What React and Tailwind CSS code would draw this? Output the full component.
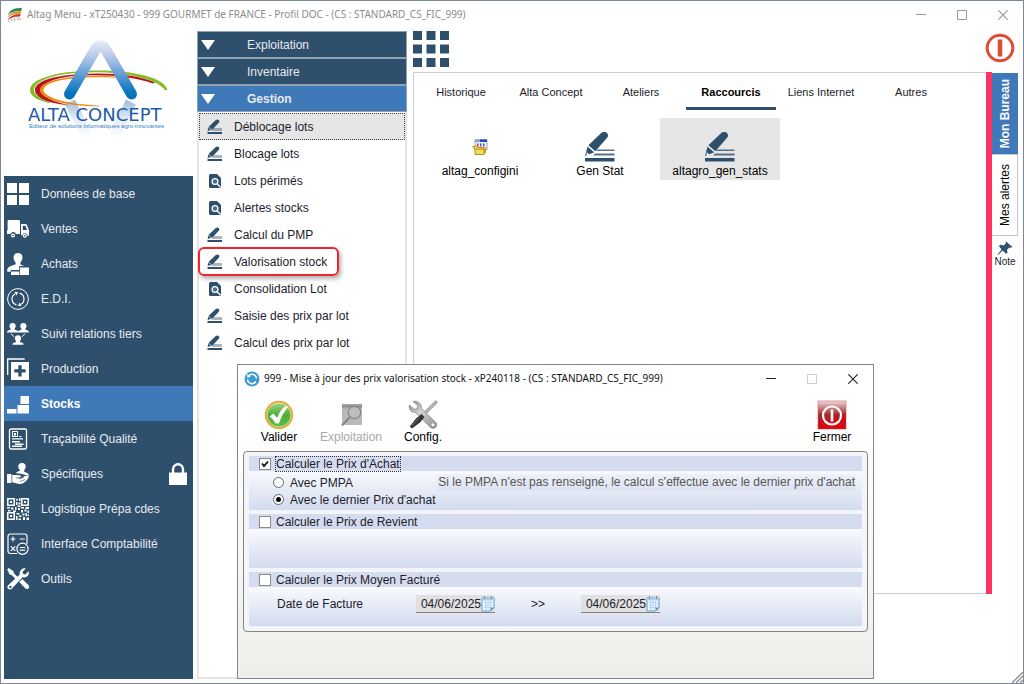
import { useState } from 'react';

const NAV_ITEMS = [
    { label: 'Données de base', icon: BlocksIcon },
    { label: 'Ventes', icon: TruckIcon },
    { label: 'Achats', icon: BuyerIcon },
    { label: 'E.D.I.', icon: EdiIcon },
    { label: 'Suivi relations tiers', icon: RelationsIcon },
    { label: 'Production', icon: ProductionIcon },
    { label: 'Stocks', icon: StocksIcon },
    { label: 'Traçabilité Qualité', icon: QualityIcon },
    { label: 'Spécifiques', icon: HandshakeIcon, locked: true },
    { label: 'Logistique Prépa cdes', icon: QrIcon },
    { label: 'Interface Comptabilité', icon: CalcIcon },
    { label: 'Outils', icon: ToolsIcon },
];

const GROUPS = ['Exploitation', 'Inventaire', 'Gestion'];

const MENU_ITEMS = [
    { label: 'Déblocage lots', type: 'edit' },
    { label: 'Blocage lots', type: 'edit' },
    { label: 'Lots périmés', type: 'search' },
    { label: 'Alertes stocks', type: 'search' },
    { label: 'Calcul du PMP', type: 'edit' },
    { label: 'Valorisation stock', type: 'edit', highlight: true },
    { label: 'Consolidation Lot', type: 'search' },
    { label: 'Saisie des prix par lot', type: 'edit' },
    { label: 'Calcul des prix par lot', type: 'edit' },
];

const TABS = ['Historique', 'Alta Concept', 'Ateliers', 'Raccourcis', 'Liens Internet', 'Autres'];

const SHORTCUTS = [
    { label: 'altag_configini', type: 'config' },
    { label: 'Gen Stat', type: 'edit' },
    { label: 'altagro_gen_stats', type: 'edit' },
];

/* ---------- navigation icons ---------- */

function NavSvg({ children }) {
    return <svg viewBox="0 0 22 22" className="size-[22px] shrink-0" fill="#fff" aria-hidden="true">{children}</svg>;
}

function BlocksIcon() {
    return <NavSvg><path d="M0 0h10v10H0zM12 0h10v10H12zM0 12h10v10H0zM12 12h10v10H12z" /></NavSvg>;
}

function TruckIcon() {
    return (
        <NavSvg>
            <path d="M1.500 2h10.300Q13 2 13 3.500V16H9a2.800 2.800 0 0 0-5.400 0H0V13l.6-1V3.200Q.6 2 1.500 2z" />
            <path fillRule="evenodd" d="M14 6h4.500q1 0 1.400.9L22 12.300V17q0 1-1 1h-.4a2.700 2.700 0 0 0-5.300-.8H14zm1.800 1.700v4.200h4.200l-1.500-4.200z" />
            <circle cx="6" cy="17.500" r="2" /><circle cx="17.800" cy="17.800" r="2" />
            <circle cx="6" cy="17.500" r=".8" fill="#2e506d" /><circle cx="17.800" cy="17.800" r=".8" fill="#2e506d" />
        </NavSvg>
    );
}

function BuyerIcon() {
    return (
        <NavSvg>
            <path d="M11 0c3 0 4.600 2 4.400 4.800-.1 2-1 3.600-2 4.500v2.200l3.600 1.400-4.800.1v4H3.500v2L0 18.500c0-3.500 1.500-4.700 4-5.600l4.600-1.700V9.300c-1.200-1-2-2.600-2-4.500C6.500 2 8 0 11 0z" />
            <path d="M13 14.500h9V22h-9zM4 18.500h8.300V22H4z" />
        </NavSvg>
    );
}

function EdiIcon() {
    return (
        <NavSvg>
            <g fill="none" stroke="#fff">
                <circle cx="11" cy="11" r="10.400" />
                <path d="M9.500 16.800A6 6 0 0 1 8.200 5.700M12.500 5.200a6 6 0 0 1 1.300 11.100" strokeWidth="1.200" />
            </g>
            <path d="M7.500 3.800l3.600.5-1.600 3.200zM14.500 18.200l-3.600-.5 1.600-3.200z" />
        </NavSvg>
    );
}

function Bust({ x, y }) {
    return <path transform={`translate(${x} ${y})`} d="M5 0c2.300 0 3.200 1.400 3.100 3.200-.1 1.200-.6 2-1.200 2.600v.8l2.400.9c.9.400 1.200 1 1.200 2H-.5c0-1 .3-1.600 1.200-2l2.400-.9v-.8C2.500 5.200 2 4.400 1.900 3.200 1.800 1.400 2.700 0 5 0z" />;
}

function RelationsIcon() {
    return (
        <NavSvg>
            <Bust x={0.6} y={0} /><Bust x={11.400} y={0} /><Bust x={6} y={12.300} />
            <path d="M4 10.800l3.200 3M18 10.800l-3.200 3" stroke="#fff" />
        </NavSvg>
    );
}

function ProductionIcon() {
    return (
        <NavSvg>
            <path d="M.7 17V1h17" fill="none" stroke="#fff" strokeWidth="1.300" />
            <path fillRule="evenodd" d="M4 4h18v18H4zm7.300 3.200v4H7.300v3.200h4v4h3.300v-4h4v-3.200h-4v-4z" />
        </NavSvg>
    );
}

function StocksIcon() {
    return <NavSvg><path d="M13.500 3H22v8h-8.500zM10.500 12H22v8.500H10.500zM0 16h9.500v4.500H0z" /></NavSvg>;
}

function QualityIcon() {
    return (
        <NavSvg>
            <rect x="2.500" y="1" width="17" height="20" rx="1.500" fill="none" stroke="#fff" strokeWidth="1.300" />
            <rect x="5.500" y="3.500" width="5" height="5" fill="none" stroke="#fff" />
            <path d="M7 5h2v2.500H7zM12 8h2.500v1H12zM5 10.200h11v1.400H5zM5 13h8v1.400H5zM8 15.500h8.500v1.400H8zM5 17.600h10V19H5z" />
        </NavSvg>
    );
}

function HandshakeIcon() {
    return (
        <NavSvg>
            <path d="M15 0c2.800 0 4 1.800 3.700 4-.2 1.600-.8 2.400-1.500 3v1.800l3 1.200c1.200.6 1.700 1.500 1.700 3l-5-1.500-4.500-1-3.400-.3c.4-.9.700-1.200 1.500-1.500l2.400-1V7c-.9-.8-1.500-1.800-1.600-3.100C11 1.800 12.200 0 15 0z" />
            <path d="M0 11h4.500v9H0z" />
            <path d="M5.200 12h3.500l4 .2c1.600.2 1.800 1.500.4 1.800l-3 .5 4 .6 3.800-2c1.500-.7 3-.3 4.100.8l-2.500 3.500c-2.500 3-6 3.900-8.500 3.300l-5.800-1.500z" />
            <path d="M9 14.800l5 .9 3-1.500M13 18.500l5-2" fill="none" stroke="#2e506d" strokeWidth=".6" />
        </NavSvg>
    );
}

function QrIcon() {
    return (
        <NavSvg>
            <g fill="none" stroke="#fff" strokeWidth="1.500">
                <path d="M.8.8h6.400v6.400H.8zM14.800.8h6.400v6.400h-6.400zM.8 14.800h6.400v6.400H.8z" />
            </g>
            <path d="M3 3h2v2H3zM17 3h2v2h-2zM3 17h2v2H3z" />
            <path d="M9 1h2v1.500H9zM12 0h1.500v3H12zM9 4h1.500v3H9zM11.500 4.500h2v2h-2zM10.500 7.500h3V9h-3zM0 9h3v1.500H0zM4 9.500h2.500v2H4zM8 9h1.500v3H8zM11 10h2v2h-2zM14 9h3v1.500h-3zM18.500 9H22v2h-3.500zM1 12h2.500v1.500H1zM6 12.500h3V14H6zM14 12h2v2.500h-2zM17.500 11.500h2v2h-2zM20.500 12.500H22V15h-1.500zM9.500 15h3v1.500h-3zM9 18h1.500v4H9zM12 17.500h2.500V19H12zM11.500 20.500H14V22h-2.500zM15.500 15.500h2v2h-2zM18.500 15h1.500v3h-1.500zM16 19h2v3h-2zM19.500 19.500H22V22h-2.500zM20.500 16.500H22v1.500h-1.500z" />
        </NavSvg>
    );
}

function CalcIcon() {
    return (
        <NavSvg>
            <g fill="none" stroke="#fff" strokeWidth="1.200">
                <path d="M10 20.500H3.500Q1 20.500 1 18V3.500Q1 1 3.500 1h14Q20 1 20 3.500v7.500" />
                <circle cx="15.500" cy="15.800" r="5.600" />
                <path d="M3.500 6h5M6 3.500v5M12.800 6h5M3.800 13.300l4.500 4.500M8.300 13.300l-4.500 4.500M12.800 14.500h5.400M12.800 17.200h5.400" />
            </g>
        </NavSvg>
    );
}

function ToolsIcon() {
    return (
        <NavSvg>
            <path d="M.2 1.500L1.700 0l4.600 2.900.6 2.300 5 5-2 2-5-5-2.200-.6z" />
            <path d="M12.200 14l3-3 6.200 6c1.100 1.100 1 2.500.1 3.400s-2.200 1-3.300-.1z" />
            <path fillRule="evenodd" d="M18.800.4l-3.200 3.300.5 2.200 2.200.5L21.600 3.200c1 2.800-.8 6.300-4.500 6.200l-1.600-.2-10.500 11.300c-1.200 1.300-2.800 1.200-3.900.3-1-1.100-1-2.600.3-3.700L12.800 6.500C11.900 2.500 15.600-.6 18.800.4zM3.400 17.700a1.200 1.200 0 1 0 .01 0z" />
        </NavSvg>
    );
}

/* ---------- other drawings ---------- */

function EditIcon() {
    return (
        <svg viewBox="0 0 30 30" className="size-[30px]" aria-hidden="true">
            <path d="M12.500 17.500h17V19H11zM10 21.500h19.500v2H8z" fill="#2e506d" opacity=".8" />
            <path d="M0 26h29.500v3.500H0z" fill="#2e506d" />
            <path d="M0 24l2.600-9.500 6.700 5.700z" fill="#2e506d" />
            <path d="M1.800 20.300l2.600 2.200-3 1z" fill="#fff" />
            <path d="M3.400 13.200L16 1.200c2-1.900 4.500-1.500 5.800-.4 1.400 1.300 1.700 3.300.3 4.900L10.300 19.200z" fill="#2e506d" />
            <path d="M2.800 14.200l6.900 5.700" stroke="#fff" strokeWidth=".9" />
        </svg>
    );
}

function SmallEditIcon() {
    return (
        <svg viewBox="0 0 16 16" className="size-4" aria-hidden="true">
            <path d="M6.500 9H15v3H4.500z" fill="#2e506d" opacity=".42" />
            <path d="M.5 13H15v2H.5z" fill="#2e506d" />
            <path d="M.5 12L1.700 7.800 8.500 1.300c1.100-1 2.600-1 3.300-.3.800.8.800 1.800 0 2.700L5.500 10.500z" fill="#2e506d" />
            <path d="M1.500 8.200l3.300 2.600" stroke="#fff" strokeWidth=".6" />
        </svg>
    );
}

function SearchDocIcon() {
    return (
        <svg viewBox="0 0 14 14" className="size-3.5" aria-hidden="true">
            <path d="M2.500 0H9l4 4v8.500q0 1.500-1.500 1.500h-9Q1 14 1 12.500v-11Q1 0 2.500 0z" fill="#2e506d" />
            <circle cx="7" cy="7.500" r="2.900" fill="#4f6c86" stroke="#fff" strokeWidth="1.300" />
            <path d="M9 9.700l3.500 3.500" stroke="#fff" strokeWidth="1.300" />
        </svg>
    );
}

function ConfigBoxIcon() {
    return (
        <svg viewBox="0 0 16 16" className="size-4" aria-hidden="true">
            <path d="M3 .8h12v10H3z" fill="#eceef4" stroke="#8a8f99" strokeWidth=".8" />
            <path d="M3 .5h12v2.500H3z" fill="#7fa5e6" /><path d="M8 .5h7v2.500H8z" fill="#1d4fc0" />
            <path d="M5 4.500h1.500v3H5z" fill="#c33" /><path d="M8 4.500h1.500v3H8z" fill="#3a62c9" /><path d="M11 4.500h1.500v3H11z" fill="#6a4ba8" />
            <path d="M.5 8l3-.8 3 1.300H12v7H3V10z" fill="#f6dc58" stroke="#9b7a14" strokeWidth=".8" />
            <path d="M3 10.200h9" fill="none" stroke="#9b7a14" strokeWidth=".8" />
            <path d="M12 9.500l2-1.500v5.500l-2 2z" fill="#c99f1d" />
        </svg>
    );
}

function AltaLogo() {
    return (
        <svg viewBox="0 0 150 110" className="h-[110px] w-[150px]" role="img" aria-label="Alta Concept">
            <defs>
                <linearGradient id="a-fill" gradientUnits="userSpaceOnUse" x1="0" y1="2" x2="0" y2="66">
                    <stop offset="0" stopColor="#f2f4fa" />
                    <stop offset=".3" stopColor="#b3c6e6" />
                    <stop offset=".65" stopColor="#4a90cf" />
                    <stop offset=".85" stopColor="#0a76bd" />
                    <stop offset="1" stopColor="#0869b3" />
                </linearGradient>
                <linearGradient id="a-mirror" gradientUnits="userSpaceOnUse" x1="0" y1="64" x2="0" y2="102">
                    <stop offset="0" stopColor="#9dbde0" />
                    <stop offset=".5" stopColor="#e3ecf7" />
                    <stop offset="1" stopColor="#fff" />
                </linearGradient>
            </defs>
            <path d="M46 66l17 34M107 66l-17 34" stroke="url(#a-mirror)" strokeWidth="11" fill="none" />
            <g transform="translate(0 2)">
                <path d="M46 34C20 37 6 44 6 52c0 6 7 10 19 13l1.500-1C16 61 10 57 10 52c0-7 13-14 36-16.500C86 31 131 38 141 52h2.500C140 36 90 29 46 34z" fill="#84bd23" />
                <path d="M56 36C26 38 11 44 11 52c0 8 14 13.500 35 15.500C30 64 18 59 18 52c0-7 13-13 38-14.500 30-1.500 58 2 73 8l2-1C116 37 86 34 56 36z" fill="#b8141f" />
                <path d="M60 38C32 39.500 16 45 16 52c0 9 24 16 59 16.500v-.8C44 66 20 60 19.500 52 19.500 46 34 41 60 39.500c20-1 42 0 54 3C100 38.500 80 37 60 38z" fill="#f08a1c" />
            </g>
            <path d="M45.500 58L71 14Q76.500 5 82 14L107.500 58" fill="none" stroke="url(#a-fill)" strokeWidth="11" strokeLinecap="round" strokeLinejoin="round" />
            <text x="4" y="85" fontSize="18" fontFamily="DejaVu Sans, sans-serif" fill="#1e5ca6">ALTA CONCEPT</text>
            <text x="5" y="92" fontSize="6" fontFamily="Liberation Sans, sans-serif" fill="#2f7fc4">Editeur de solutions informatiques agro-innovantes</text>
        </svg>
    );
}

function FlagIcon() {
    return (
        <svg viewBox="0 0 16 16" className="size-4" aria-hidden="true">
            <path d="M1 8.500C2.500 2.500 7 1 15 .8L14.300 4C8 4 4 5 1 8.500z" fill="#2e8b57" />
            <path d="M.8 11C2.500 6 8 4.300 14.300 4.300l-.6 2.500C8 6.800 4 7.500.8 11z" fill="#f08a1c" />
            <path d="M.5 13.500C2.500 9 7 7 13.700 6.900l-.6 2.600C8 9.500 4 10 .5 13.500z" fill="#c33324" />
            <path d="M1.500 13.500l1 2M4 11.500l1.500 3M7 10.800l1 3M10 10.500l1.500 3M12.500 10.500l1 2.500" stroke="#9b948c" strokeWidth=".9" />
        </svg>
    );
}

function WindowButtons({ color, maxColor }) {
    return (
        <div className="flex">
            <button aria-label="Réduire" className="flex h-6 w-[41px] items-center justify-center">
                <svg viewBox="0 0 10 10" className="size-2.5"><path d="M0 4.500h10" stroke={color} /></svg>
            </button>
            <button aria-label="Agrandir" className="flex h-6 w-[41px] items-center justify-center">
                <svg viewBox="0 0 10 10" className="size-2.5"><path d="M.5.5h9v9h-9z" fill="none" stroke={maxColor || color} /></svg>
            </button>
            <button aria-label="Fermer la fenêtre" className="flex h-6 w-[41px] items-center justify-center">
                <svg viewBox="0 0 10 10" className="size-2.5"><path d="M.3.3l9.400 9.400M9.700.3L.3 9.700" stroke={color} strokeWidth="1.100" /></svg>
            </button>
        </div>
    );
}

function ValidateIcon() {
    return (
        <svg viewBox="0 0 30 30" className="size-[30px]" aria-hidden="true">
            <defs>
                <linearGradient id="ok" x1="0" y1="0" x2="0" y2="1">
                    <stop offset="0" stopColor="#a9d98a" /><stop offset=".5" stopColor="#4fae3a" /><stop offset="1" stopColor="#5cc04a" />
                </linearGradient>
            </defs>
            <circle cx="15" cy="15" r="13.200" fill="url(#ok)" stroke="#f0a830" strokeWidth="2" />
            <circle cx="15" cy="15" r="11.900" fill="none" stroke="#e4f3c8" strokeWidth=".7" />
            <path d="M5.500 16.500l4-3 3.500 4.500C15 12.500 18 8.500 21.500 6l2.800 1C20 11.500 17 17 15 23.500h-3.500C10 21 8.500 18.500 5.500 16.500z" fill="#fff" />
        </svg>
    );
}

function ExploitIcon() {
    return (
        <svg viewBox="0 0 30 30" className="size-[30px]" aria-hidden="true">
            <path d="M6 4h20v21H6z" fill="#b9b9b9" />
            <path d="M6 4h20v4.500H6z" fill="#a3a3a3" />
            <path d="M6 6.300h20" stroke="#808080" />
            <circle cx="18.500" cy="12.500" r="6.200" fill="#bdbdbd" stroke="#858585" strokeWidth="1.200" />
            <path d="M14 17L6 25.500" stroke="#858585" strokeWidth="2" />
        </svg>
    );
}

function SettingsIcon() {
    return (
        <svg viewBox="0 0 30 30" className="size-[30px]" aria-hidden="true">
            <defs>
                <linearGradient id="metal" x1="0" y1="0" x2="1" y2="1">
                    <stop offset="0" stopColor="#8b8b8b" /><stop offset=".4" stopColor="#d2d2d2" /><stop offset="1" stopColor="#8c8c8c" />
                </linearGradient>
            </defs>
            <path d="M29 1.500L27.500.8 15 13l2 2L29.300 3z" fill="#b4b4b4" stroke="#777" strokeWidth=".5" />
            <path d="M5 1.500l4.500 4-.5 3-3 .8L1.500 5C.3 9 3 12.800 7.500 12.500L22 27c1.500 1.700 4 1.700 5.500.4s1.700-4 0-5.500L13.500 8.500C14 3.500 9.500.2 5 1.500z" fill="url(#metal)" stroke="#777" strokeWidth=".6" />
            <circle cx="25" cy="24.800" r="1.500" fill="#fafafa" />
            <path d="M13.500 14l3 3-4.500 5.500L4 28.500 1.800 26.500 8 18.500z" fill="#343434" />
            <path d="M11 18L4 26" stroke="#777" strokeWidth=".8" />
        </svg>
    );
}

function CloseIcon() {
    return (
        <svg viewBox="0 0 30 30" className="size-[30px]" aria-hidden="true">
            <defs>
                <linearGradient id="red" x1="0" y1="0" x2="0" y2="1">
                    <stop offset="0" stopColor="#ecd9d9" /><stop offset=".3" stopColor="#c4696c" /><stop offset=".5" stopColor="#a3282c" /><stop offset="1" stopColor="#dc0410" />
                </linearGradient>
            </defs>
            <path d="M1 1h28v28H1z" fill="url(#red)" stroke="#c56a6e" strokeWidth=".6" />
            <path d="M29 12v17H1v-7q18 0 28-10z" fill="#e00510" opacity=".5" />
            <circle cx="15" cy="15.500" r="9" fill="none" stroke="#fff" strokeWidth="2.200" />
            <path d="M15 9.500v12" stroke="#fff" strokeWidth="2.600" />
        </svg>
    );
}

/* ---------- page parts ---------- */

function Sidebar() {
    const [active, setActive] = useState('Stocks');
    return (
        <div className="flex w-[189px] shrink-0 flex-col">
            <div className="flex h-[148px] shrink-0 items-start justify-center pt-2">
                <AltaLogo />
            </div>
            <nav className="flex-1 bg-[#2e506d]">
                <ul>
                    {NAV_ITEMS.map(item => (
                        <li key={item.label}>
                            <button
                                onClick={() => setActive(item.label)}
                                className={`flex h-[35px] w-full items-center gap-3 pr-[5px] pl-[3px] text-left ${item.label === active ? 'bg-[#3f79b7] font-bold text-white' : 'text-[#e6ebf0]'}`}
                            >
                                <item.icon />
                                <span className="flex-1">{item.label}</span>
                                {item.locked && (
                                    <svg viewBox="0 0 20 22" className="h-[22px] w-5" aria-hidden="true">
                                        <path d="M5 10V6.500a5 5.300 0 0 1 10 0V10" fill="none" stroke="#fff" strokeWidth="2.400" />
                                        <path d="M1 9.500h18V22H1z" fill="#fff" />
                                    </svg>
                                )}
                            </button>
                        </li>
                    ))}
                </ul>
            </nav>
        </div>
    );
}

function MenuColumn() {
    const [open, setOpen] = useState('Gestion');
    return (
        <div className="ml-1 flex w-[210px] shrink-0 flex-col pt-[3px]">
            {GROUPS.map(group => (
                <button
                    key={group}
                    onClick={() => setOpen(group)}
                    className={`flex h-[27px] shrink-0 items-center border border-[#8fa3b5] pl-[3px] text-left text-[#e6ebf0] ${group === open ? 'bg-[#3f79b7] font-bold' : 'bg-[#2e506d]'}`}
                >
                    <svg viewBox="0 0 14 10" className="h-2.5 w-3.5" aria-hidden="true"><path d="M0 0h14L7 10z" fill="#fff" /></svg>
                    <span className="ml-8">{group}</span>
                </button>
            ))}
            <ul className="flex-1 border-x-2 border-b-2 border-[#e4e4e4] pt-px">
                {MENU_ITEMS.map((item, i) => (
                    <li key={item.label} className="relative">
                        <button className={`flex h-[27px] w-full items-center border pl-[7px] text-left text-[#1c1c2c] ${i === 0 ? 'border-dotted border-[#444] bg-[#e6e6e6]' : 'border-transparent'}`}>
                            <span className="flex w-4 justify-center">
                                {item.type === 'edit' ? <SmallEditIcon /> : <SearchDocIcon />}
                            </span>
                            <span className="ml-[11px]">{item.label}</span>
                        </button>
                        {item.highlight && (
                            <span className="pointer-events-none absolute -inset-y-px -left-px w-[141px] rounded-md border-2 border-[#f0262c] shadow-[2px_3px_4px_rgba(0,0,0,0.3)]" />
                        )}
                    </li>
                ))}
            </ul>
        </div>
    );
}

function Desktop() {
    const [tab, setTab] = useState('Raccourcis');
    return (
        <div className="ml-[6px] flex flex-1 flex-col pr-[5px] pb-[85px]">
            <div className="flex h-11 shrink-0 items-start justify-between pt-[3px]">
                <button aria-label="Applications">
                    <svg viewBox="0 0 36 36" className="size-9">
                        <path d="M0 0h9v9H0zM13.500 0h9v9h-9zM27 0h9v9h-9zM0 13.500h9v9H0zM13.500 13.500h9v9h-9zM27 13.500h9v9h-9zM0 27h9v9H0zM13.500 27h9v9h-9zM27 27h9v9h-9z" fill="#2e506d" />
                    </svg>
                </button>
                <button aria-label="Quitter" className="mt-[2px] mr-[3px]">
                    <svg viewBox="0 0 30 30" className="size-[30px]">
                        <circle cx="15" cy="15" r="12.800" fill="none" stroke="#dd4b39" strokeWidth="3" />
                        <path d="M12.700 6.500h4.600v17h-4.600z" fill="#dd4b39" />
                    </svg>
                </button>
            </div>
            <div className="flex flex-1">
                <div className="flex-1 border border-r-0 border-[#cfcfcf] pl-[2px]">
                    <div role="tablist" className="flex text-[11px]">
                        {TABS.map(name => (
                            <button
                                key={name}
                                role="tab"
                                aria-selected={name === tab}
                                onClick={() => setTab(name)}
                                className={`h-[37px] w-[90px] border-b-3 pt-1 ${name === tab ? 'border-[#2e506d] font-bold text-black' : 'border-transparent text-[#1c1c2c]'}`}
                            >
                                {name}
                            </button>
                        ))}
                    </div>
                    <ul className="mt-2 flex pl-1">
                        {SHORTCUTS.map((item, i) => (
                            <li key={item.label}>
                                <button className={`flex h-[62px] w-[120px] flex-col items-center justify-end pb-px text-black ${i === 2 ? 'bg-[#e6e6e6]' : ''}`}>
                                    <span className="flex h-[30px] items-center">
                                        {item.type === 'config' ? <ConfigBoxIcon /> : <EditIcon />}
                                    </span>
                                    <span className="mt-px leading-4">{item.label}</span>
                                </button>
                            </li>
                        ))}
                    </ul>
                </div>
                <div className="w-[6px] bg-[#fc3464]" />
                <div className="flex w-[26px] flex-col items-center pt-px">
                    <button className="flex h-[81px] w-full items-center justify-center bg-[#3f79b7] font-bold text-white">
                        <span className="rotate-180 [writing-mode:vertical-rl]">Mon Bureau</span>
                    </button>
                    <button className="flex h-[82px] w-full items-center justify-center border border-l-0 border-[#c4c4c4] text-black">
                        <span className="rotate-180 [writing-mode:vertical-rl]">Mes alertes</span>
                    </button>
                    <button className="mt-1 flex flex-col items-center text-[10px] leading-3 text-[#1c1c2c]">
                        <svg viewBox="0 0 16 16" className="size-4" aria-hidden="true">
                            <path d="M8.500 1L15.500 7l-1.600.8-1.400-.4-2.500 2.300.5 3.300-1.500.8-3.400-3.400L1 15l-.5-.5L4.600 9.400 2 6.200l1-1.400 3.700.6L9 3.200z" fill="#2e506d" />
                        </svg>
                        <span>Note</span>
                    </button>
                </div>
            </div>
        </div>
    );
}

function ToolButton({ label, disabled, children }) {
    return (
        <button disabled={disabled} className={`flex w-[72px] flex-col items-center ${disabled ? 'text-[#a9a9a9]' : 'text-black'}`}>
            {children}
            <span className="leading-[14px]">{label}</span>
        </button>
    );
}

function Section({ title, checked, focused, children }) {
    return (
        <section className="mb-1">
            <label className="flex h-[15px] items-center bg-[#d6dcef] pl-[10px]">
                <span className="grid">
                    <input type="checkbox" defaultChecked={checked} className="peer size-3 appearance-none border border-[#8a8a8a] bg-white [grid-area:1/1]" />
                    <svg viewBox="0 0 12 12" className="pointer-events-none hidden size-3 [grid-area:1/1] peer-checked:block" aria-hidden="true">
                        <path d="M3 5.500l2 2.500 4-4.500" fill="none" stroke="#111" strokeWidth="1.800" />
                    </svg>
                </span>
                <span className={`ml-1 border leading-[14px] ${focused ? 'border-dotted border-[#333]' : 'border-transparent'}`}>{title}</span>
            </label>
            <div className="h-[39px] bg-linear-to-b from-[#f8fafd] to-[#d4dbef]">{children}</div>
        </section>
    );
}

function PriceRadio({ label, checked }) {
    return (
        <label className="flex h-[17px] items-center gap-[6px] whitespace-nowrap">
            <span className="grid">
                <input type="radio" name="prix-achat" defaultChecked={checked} className="peer size-[11px] appearance-none rounded-full border border-[#666] bg-white [grid-area:1/1]" />
                <span className="pointer-events-none hidden size-[5px] place-self-center rounded-full bg-black [grid-area:1/1] peer-checked:block" />
            </span>
            {label}
        </label>
    );
}

function DateField({ label }) {
    return (
        <div className="flex h-[18px] items-center border-b border-[#85826f] bg-[#e1e1e1]">
            <input aria-label={label} defaultValue="04/06/2025" className="w-[65px] bg-transparent text-right outline-none" />
            <button aria-label={`Choisir ${label}`}>
                <svg viewBox="0 0 14 16" className="h-4 w-3.5">
                    <path d="M1 2h12v9.500L9.500 15H1z" fill="#f4f9ff" stroke="#5d9bd3" />
                    <path d="M1 2h12v2.500H1z" fill="#a9cdee" />
                    <path d="M3 6.500h8.500M3 9h8.500M3 11.500h6M4.500 5v9M7 5v9M9.500 5v7" stroke="#b7d3ee" />
                    <path d="M3.500 0v3M10.500 0v3" stroke="#8a8a8a" />
                    <path d="M13 11.500L9.500 15v-3.500z" fill="#4a90d2" />
                </svg>
            </button>
        </div>
    );
}

function PriceDialog() {
    return (
        <div role="dialog" aria-label="Mise à jour des prix valorisation stock" className="absolute top-[363px] left-[236px] flex w-[637px] flex-col border border-[#858585] bg-linear-to-b from-white from-20% to-[#eeeeea] pb-[46px] text-[#1c1c2c]">
            <header className="flex h-[27px] shrink-0 items-center bg-white pl-[6px] font-['Noto_Sans',sans-serif] text-[10px] text-[#111]">
                <svg viewBox="0 0 16 16" className="size-4" aria-hidden="true">
                    <circle cx="8" cy="8" r="7.500" fill="#3d9bd0" />
                    <path d="M3.500 8.500a4.500 4.500 0 0 0 8.300 2M12.500 7.500a4.500 4.500 0 0 0-8-2.500" fill="none" stroke="#fff" strokeWidth="1.500" />
                    <path d="M3 3l.5 4 3.300-1.500z" fill="#fff" />
                </svg>
                <h2 className="ml-1 flex-1">999 - Mise à jour des prix valorisation stock - xP240118 - (CS : STANDARD_CS_FIC_999)</h2>
                <WindowButtons color="#222" maxColor="#ccc" />
            </header>
            <div className="flex h-[59px] shrink-0 justify-between px-[5px] pt-2">
                <div className="flex">
                    <ToolButton label="Valider"><ValidateIcon /></ToolButton>
                    <ToolButton label="Exploitation" disabled><ExploitIcon /></ToolButton>
                    <ToolButton label="Config."><SettingsIcon /></ToolButton>
                </div>
                <ToolButton label="Fermer"><CloseIcon /></ToolButton>
            </div>
            <form className="mx-[5px] rounded border border-[#85857c] bg-[#f4f5fb] px-[5px] pt-1 pb-px" onSubmit={e => e.preventDefault()}>
                <Section title="Calculer le Prix d'Achat" checked focused>
                    <div className="flex items-start justify-between pt-[3px] pr-[6px] pl-6">
                        <div>
                            <PriceRadio label="Avec PMPA" />
                            <PriceRadio label="Avec le dernier Prix d'achat" checked />
                        </div>
                        <p className="bg-linear-to-b from-[#eef1f8] to-[#dce2f1] px-px leading-[17px] whitespace-nowrap text-[#555]">
                            Si le PMPA n'est pas renseigné, le calcul s'effectue avec le dernier prix d'achat
                        </p>
                    </div>
                </Section>
                <Section title="Calculer le Prix de Revient" />
                <Section title="Calculer le Prix Moyen Facturé">
                    <div className="flex pt-2 pl-7">
                        <span className="w-[139px] leading-[18px]">Date de Facture</span>
                        <DateField label="date de début" />
                        <span className="w-[86px] text-center leading-[18px]">&gt;&gt;</span>
                        <DateField label="date de fin" />
                    </div>
                </Section>
            </form>
        </div>
    );
}

export default function App() {
    return (
        <div className="relative flex min-h-screen flex-col border border-[#7c8799] bg-white font-['Liberation_Sans',Arial,sans-serif] text-[12px]">
            <header className="flex h-[27px] shrink-0 items-center pl-[6px]">
                <FlagIcon />
                <h1 className="ml-1 flex-1 font-['Noto_Sans',sans-serif] text-[10px] text-[#8c8c8c]">
                    Altag Menu - xT250430 - 999 GOURMET de FRANCE - Profil DOC - (CS : STANDARD_CS_FIC_999)
                </h1>
                <WindowButtons color="#999" />
            </header>
            <main className="flex flex-1 pb-1 pl-[3px]">
                <Sidebar />
                <MenuColumn />
                <Desktop />
            </main>
            <PriceDialog />
            <svg viewBox="0 0 11 11" className="absolute right-0 bottom-0 size-[11px]" aria-hidden="true">
                <path d="M0 11L11 0M4 11l7-7M8 11l3-3" stroke="#8d8d8d" strokeWidth="1.300" />
            </svg>
        </div>
    );
}
